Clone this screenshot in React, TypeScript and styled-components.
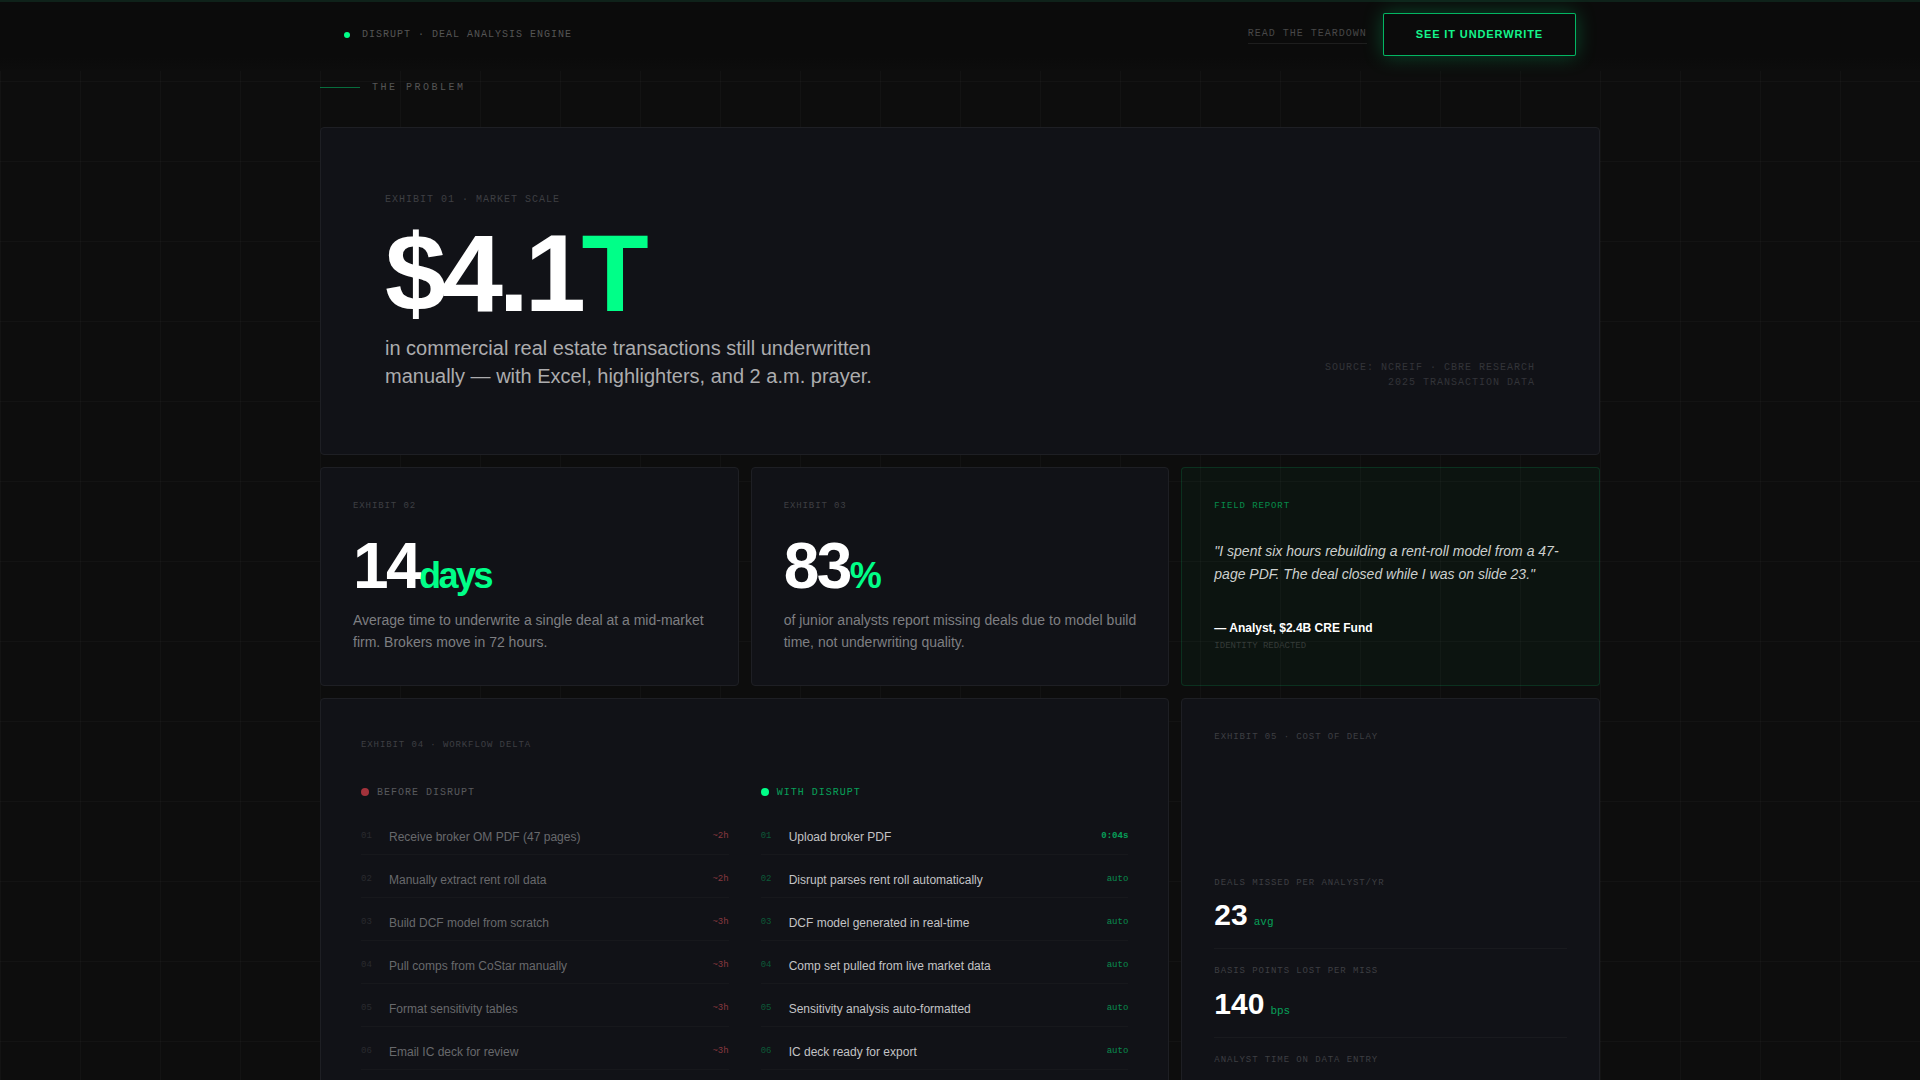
import React from "react";
import styled, { createGlobalStyle, css } from "styled-components";

const green = "#00ff88";
const mono = `"Liberation Mono", "Courier New", monospace`;
const sans = `"Liberation Sans", Arial, sans-serif`;

const GlobalStyle = createGlobalStyle`
  *, *::before, *::after { box-sizing: border-box; }
  html { scrollbar-width: none; background: #0d0d0d; }
  body { margin: 0; color: #fff; font-family: ${sans}; line-height: 1.5; }
  h1, h2, h3, p, ul, ol, dl, dd, blockquote, figure { margin: 0; padding: 0; }
  ul, ol { list-style: none; }
`;

const Page = styled.div`
  min-height: 100vh;
  border-top: 2px solid #0f221a;
  background-color: #0d0d0d;
  background-image:
    linear-gradient(rgba(255, 255, 255, 0.022) 1px, transparent 1px),
    linear-gradient(90deg, rgba(255, 255, 255, 0.022) 1px, transparent 1px);
  background-size: 80px 80px;
  background-position: 0 -1px;
`;

const Header = styled.header`
  background: linear-gradient(#0b0b0b 80%, #0d0d0d);
`;

const HeaderInner = styled.div`
  display: flex;
  align-items: center;
  justify-content: space-between;
  max-width: 1280px;
  margin: 0 auto;
  padding: 11px 24px 15px;
`;

const Brand = styled.div`
  display: flex;
  align-items: center;
  gap: 12px;
  color: #555;
  font: 10px/1.5 ${mono};
  letter-spacing: 0.1em;
  text-transform: uppercase;
`;

const Dot = styled.span<{ $size: number; $color: string }>`
  flex: none;
  width: ${(p) => p.$size}px;
  height: ${(p) => p.$size}px;
  border-radius: 50%;
  background: ${(p) => p.$color};
`;

const Actions = styled.nav`
  display: flex;
  align-items: center;
  gap: 16px;
`;

const TeardownLink = styled.a`
  padding-bottom: 2px;
  border-bottom: 1px solid #1e1e1e;
  color: #484848;
  font: 10px/1.5 ${mono};
  letter-spacing: 0.1em;
  text-decoration: none;
  text-transform: uppercase;
`;

const CtaButton = styled.button`
  padding: 14px 32px;
  border: 1px solid rgba(0, 255, 136, 0.7);
  border-radius: 2px;
  background: #0b0b0b;
  box-shadow: 0 0 20px rgba(0, 255, 136, 0.25);
  color: #14f58b;
  font: bold 11px/13px ${sans};
  letter-spacing: 0.08em;
  text-transform: uppercase;
  cursor: pointer;
`;

const Main = styled.main`
  max-width: 1280px;
  margin: 0 auto;
  padding: 9px 0 80px;
`;

const SectionTitle = styled.h2`
  display: flex;
  align-items: center;
  gap: 12px;
  margin-bottom: 32px;
  color: #555;
  font: 10px/1.5 ${mono};
  letter-spacing: 0.25em;
  text-transform: uppercase;

  &::before {
    content: "";
    width: 40px;
    height: 1px;
    background: rgba(0, 255, 136, 0.4);
  }
`;

const Grid = styled.div`
  display: grid;
  grid-template-columns: repeat(3, minmax(0, 1fr));
  gap: 12px;
`;

const Card = styled.section<{ $span?: number; $pad?: number; $accent?: boolean }>`
  display: flex;
  flex-direction: column;
  grid-column: span ${(p) => p.$span ?? 1};
  padding: ${(p) => p.$pad ?? 32}px;
  border: 1px solid ${(p) => (p.$accent ? "rgba(0, 255, 136, 0.12)" : "#1e1f24")};
  border-radius: 4px;
  background: ${(p) => (p.$accent ? "rgba(0, 255, 136, 0.03)" : "#111217")};
`;

const Label = styled.h3<{ $size?: number; $gap?: number; $accent?: boolean }>`
  margin-bottom: ${(p) => p.$gap ?? 0}px;
  color: ${(p) => (p.$accent ? "rgba(0, 255, 136, 0.5)" : "#3e3f43")};
  font: ${(p) => p.$size ?? 9}px/1.5 ${mono};
  letter-spacing: 0.1em;
  text-transform: uppercase;
`;

const HeroBody = styled.div`
  display: flex;
  align-items: flex-end;
  justify-content: space-between;
`;

const HeroFigure = styled.p`
  margin-bottom: 12px;
  font-size: 110px;
  font-weight: bold;
  line-height: 99px;
  letter-spacing: -0.04em;
`;

const Accent = styled.span`
  color: ${green};
`;

const HeroText = styled.p`
  max-width: 520px;
  color: #acacae;
  font-size: 20px;
  line-height: 28px;
`;

const Source = styled.p`
  color: #333439;
  font: 10px/1.5 ${mono};
  letter-spacing: 0.1em;
  text-align: right;
  text-transform: uppercase;
`;

const Figure = styled.p`
  margin-bottom: 11px;
  font-size: 64px;
  font-weight: bold;
  line-height: 1;
  letter-spacing: -0.04em;

  span {
    color: ${green};
    font-size: 36px;
  }
`;

const Description = styled.p`
  color: #7e7f82;
  font-size: 14px;
  line-height: 1.6;
`;

const Quote = styled.blockquote`
  color: #cdd0ce;
  font-size: 14px;
  font-style: italic;
  line-height: 23px;
`;

const Attribution = styled.div`
  display: flex;
  flex-direction: column;
  gap: 3px;
  margin-top: auto;
`;

const Author = styled.p`
  font-size: 12px;
  font-weight: bold;
`;

const Redacted = styled.p`
  color: #353b38;
  font: 9px/1.5 ${mono};
  text-transform: uppercase;
`;

const Compare = styled.div`
  display: grid;
  grid-template-columns: repeat(2, minmax(0, 1fr));
  gap: 32px;
`;

const ColumnHead = styled.h3<{ $accent?: boolean }>`
  display: flex;
  align-items: center;
  gap: 8px;
  margin-bottom: 20px;
  color: ${(p) => (p.$accent ? "rgba(0, 255, 136, 0.6)" : "#58595d")};
  font: 10px/1.5 ${mono};
  letter-spacing: 0.1em;
  text-transform: uppercase;
`;

const Steps = styled.ol`
  display: flex;
  flex-direction: column;
  gap: 8px;
`;

const Step = styled.li`
  display: flex;
  align-items: flex-start;
  gap: 12px;
  padding: 8px 0;
  border-bottom: 1px solid #17181c;
`;

const StepNumber = styled.span<{ $accent?: boolean }>`
  width: 16px;
  padding-top: 2px;
  color: ${(p) => (p.$accent ? "rgba(0, 255, 136, 0.3)" : "#2a2b2f")};
  font: 9px/1.5 ${mono};
`;

const StepText = styled.span<{ $accent?: boolean }>`
  flex: 1;
  color: ${(p) => (p.$accent ? "#c3c3c5" : "#68696c")};
  font-size: 12px;
`;

const toneStyles = {
  slow: css`
    color: #87383f;
  `,
  auto: css`
    color: rgba(0, 255, 136, 0.5);
  `,
  fast: css`
    color: rgba(0, 255, 136, 0.6);
    font-weight: bold;
  `,
};

const StepTime = styled.span<{ $tone: keyof typeof toneStyles }>`
  padding-top: 2px;
  font: 9px/1.5 ${mono};
  ${(p) => toneStyles[p.$tone]}
`;

const Stats = styled.div`
  display: flex;
  flex-direction: column;
  gap: 16px;
  margin-top: 132px;
`;

const Stat = styled.div`
  padding-bottom: 12px;
  border-bottom: 1px solid #191a1e;

  &:last-child {
    padding-bottom: 0;
    border-bottom: 0;
  }
`;

const StatValue = styled.p`
  font-size: 30px;
  font-weight: bold;
  line-height: 42px;

  span {
    margin-left: 6px;
    color: rgba(0, 255, 136, 0.6);
    font: 11px ${mono};
  }
`;

type StepData = { text: string; time: string; tone: keyof typeof toneStyles };

const before: StepData[] = [
  { text: "Receive broker OM PDF (47 pages)", time: "~2h", tone: "slow" },
  { text: "Manually extract rent roll data", time: "~2h", tone: "slow" },
  { text: "Build DCF model from scratch", time: "~3h", tone: "slow" },
  { text: "Pull comps from CoStar manually", time: "~3h", tone: "slow" },
  { text: "Format sensitivity tables", time: "~3h", tone: "slow" },
  { text: "Email IC deck for review", time: "~3h", tone: "slow" },
];

const after: StepData[] = [
  { text: "Upload broker PDF", time: "0:04s", tone: "fast" },
  { text: "Disrupt parses rent roll automatically", time: "auto", tone: "auto" },
  { text: "DCF model generated in real-time", time: "auto", tone: "auto" },
  { text: "Comp set pulled from live market data", time: "auto", tone: "auto" },
  { text: "Sensitivity analysis auto-formatted", time: "auto", tone: "auto" },
  { text: "IC deck ready for export", time: "auto", tone: "auto" },
];

const stats = [
  { label: "Deals missed per analyst/yr", value: "23", unit: "avg" },
  { label: "Basis points lost per miss", value: "140", unit: "bps" },
  { label: "Analyst time on data entry" },
];

function StepList({ steps, accent }: { steps: StepData[]; accent?: boolean }) {
  return (
    <Steps>
      {steps.map((step, i) => (
        <Step key={step.text}>
          <StepNumber $accent={accent}>{String(i + 1).padStart(2, "0")}</StepNumber>
          <StepText $accent={accent}>{step.text}</StepText>
          <StepTime $tone={step.tone}>{step.time}</StepTime>
        </Step>
      ))}
    </Steps>
  );
}

export default function App() {
  return (
    <Page>
      <GlobalStyle />
      <Header>
        <HeaderInner>
          <Brand>
            <Dot $size={6} $color={green} />
            Disrupt · Deal Analysis Engine
          </Brand>
          <Actions>
            <TeardownLink href="#teardown">Read the teardown</TeardownLink>
            <CtaButton type="button">See it underwrite</CtaButton>
          </Actions>
        </HeaderInner>
      </Header>

      <Main>
        <SectionTitle>The Problem</SectionTitle>
        <Grid>
          <Card $span={3} $pad={64}>
            <Label $size={10} $gap={16}>Exhibit 01 · Market Scale</Label>
            <HeroBody>
              <div>
                <HeroFigure>
                  $4.1<Accent>T</Accent>
                </HeroFigure>
                <HeroText>
                  in commercial real estate transactions still underwritten manually — with Excel,
                  highlighters, and 2 a.m. prayer.
                </HeroText>
              </div>
              <Source>
                Source: NCREIF · CBRE Research
                <br />
                2025 Transaction Data
              </Source>
            </HeroBody>
          </Card>

          <Card>
            <Label $gap={20}>Exhibit 02</Label>
            <Figure>
              14<span>days</span>
            </Figure>
            <Description>
              Average time to underwrite a single deal at a mid-market firm. Brokers move in 72 hours.
            </Description>
          </Card>

          <Card>
            <Label $gap={20}>Exhibit 03</Label>
            <Figure>
              83<span>%</span>
            </Figure>
            <Description>
              of junior analysts report missing deals due to model build time, not underwriting quality.
            </Description>
          </Card>

          <Card $accent>
            <Label $accent $gap={26}>Field Report</Label>
            <Quote>
              "I spent six hours rebuilding a rent-roll model from a 47-page PDF. The deal closed while
              I was on slide 23."
            </Quote>
            <Attribution>
              <Author>— Analyst, $2.4B CRE Fund</Author>
              <Redacted>Identity redacted</Redacted>
            </Attribution>
          </Card>

          <Card $span={2} $pad={40}>
            <Label $gap={32}>Exhibit 04 · Workflow Delta</Label>
            <Compare>
              <div>
                <ColumnHead>
                  <Dot $size={8} $color="#a3323b" />
                  Before Disrupt
                </ColumnHead>
                <StepList steps={before} />
              </div>
              <div>
                <ColumnHead $accent>
                  <Dot $size={8} $color={green} />
                  With Disrupt
                </ColumnHead>
                <StepList steps={after} accent />
              </div>
            </Compare>
          </Card>

          <Card>
            <Label>Exhibit 05 · Cost of Delay</Label>
            <Stats>
              {stats.map((stat) => (
                <Stat key={stat.label}>
                  <Label $gap={4}>{stat.label}</Label>
                  {stat.value && (
                    <StatValue>
                      {stat.value}
                      <span>{stat.unit}</span>
                    </StatValue>
                  )}
                </Stat>
              ))}
            </Stats>
          </Card>
        </Grid>
      </Main>
    </Page>
  );
}
